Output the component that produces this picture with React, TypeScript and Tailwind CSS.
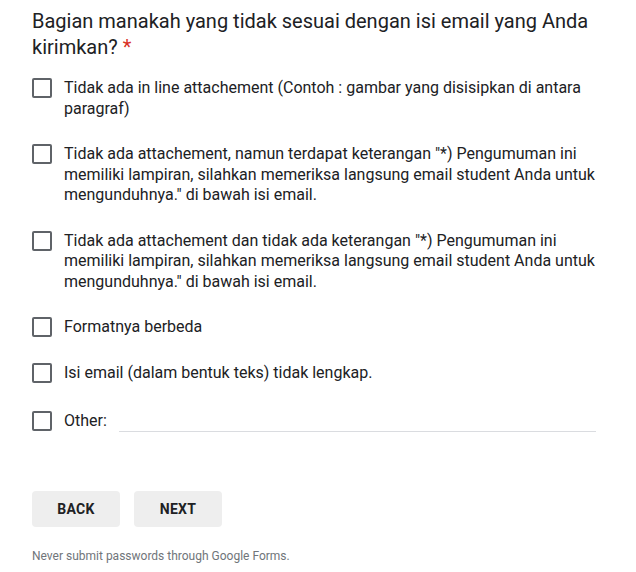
const OPTIONS = [
  "Tidak ada in line attachement (Contoh : gambar yang disisipkan di antara paragraf)",
  'Tidak ada attachement, namun terdapat keterangan "*) Pengumuman ini memiliki lampiran, silahkan memeriksa langsung email student Anda untuk mengunduhnya." di bawah isi email.',
  'Tidak ada attachement dan tidak ada keterangan "*) Pengumuman ini memiliki lampiran, silahkan memeriksa langsung email student Anda untuk mengunduhnya." di bawah isi email.',
  "Formatnya berbeda",
  "Isi email (dalam bentuk teks) tidak lengkap.",
];

function Box() {
  return <span className="h-5 w-5 shrink-0 rounded-[2px] border-2 border-[#5f6368]" />;
}

export default function App() {
  return (
    <div className="min-h-screen bg-white font-['Roboto',sans-serif] text-[#202124]">
      <div className="px-8 pt-[8px]">
        <h1 className="text-[20px] leading-[26px]">
          Bagian manakah yang tidak sesuai dengan isi email yang Anda kirimkan?{" "}
          <span className="text-[#d93025]">*</span>
        </h1>

        <ul className="mt-[18px] flex flex-col gap-[25px] pr-2">
          {OPTIONS.map((o) => (
            <li key={o} className="flex items-start gap-3">
              <Box />
              <span className="text-[16px] leading-[20.5px]">{o}</span>
            </li>
          ))}
          <li className="flex items-start gap-3 pt-[3px]">
            <Box />
            <span className="text-[16px] leading-[20.5px]">Other:</span>
            <span className="mt-[20px] h-px flex-1 bg-[#dadce0]" />
          </li>
        </ul>

        <div className="mt-[59px] flex gap-[14px]">
          <button className="h-9 w-[88px] rounded bg-[#eeeeee] text-[14px] font-bold tracking-[0.25px] text-[#202124]">
            BACK
          </button>
          <button className="h-9 w-[88px] rounded bg-[#eeeeee] text-[14px] font-bold tracking-[0.25px] text-[#202124]">
            NEXT
          </button>
        </div>

        <p className="mt-[21px] text-[12px] leading-4 text-[#70757a]">Never submit passwords through Google Forms.</p>
      </div>
    </div>
  );
}
